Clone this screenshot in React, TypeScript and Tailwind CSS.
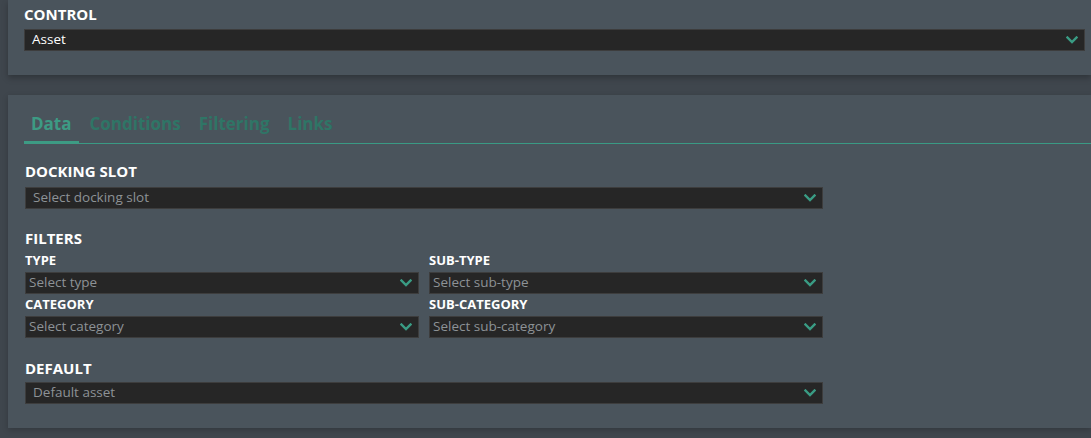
import React from "react";

const font = { fontFamily: '"Open Sans", "Noto Sans", sans-serif' };

function Chevron() {
  return (
    <svg width="12" height="8" viewBox="0 0 12 8" className="shrink-0">
      <path d="M1.5 1.5 L6 6 L10.5 1.5" fill="none" stroke="#3a9c84" strokeWidth="2.4" strokeLinecap="square" />
    </svg>
  );
}

function Select({ text, placeholder = true, pad = "pl-[7px]" }: { text: string; placeholder?: boolean; pad?: string }) {
  return (
    <div className={`h-[22px] flex items-center justify-between bg-[#262626] border border-[#3d3d3d] ${pad} pr-[6px]`}>
      <span className={`text-[13.5px] leading-none ${placeholder ? "text-[#8d9296]" : "text-white"}`}>{text}</span>
      <Chevron />
    </div>
  );
}

function Label({ children, small = false }: { children: React.ReactNode; small?: boolean }) {
  return (
    <div className={small ? "text-[13px] leading-[16px] font-bold text-white" : "text-[15px] leading-[20px] font-bold text-white"}>
      {children}
    </div>
  );
}

export default function App() {
  const tabs = ["Data", "Conditions", "Filtering", "Links"];
  return (
    <div style={font} className="w-[1091px] h-[438px] overflow-hidden bg-[#3f464d] pl-2 flex flex-col">
      <div className="h-[75px] bg-[#4a545c] pl-[16px] pr-[6px] pt-[4px] shadow-[0_3px_6px_rgba(0,0,0,0.25)] relative z-10">
        <Label>CONTROL</Label>
        <div className="mt-[5px]">
          <Select text="Asset" placeholder={false} />
        </div>
      </div>
      <div className="h-[20px]" />
      <div className="h-[333px] bg-[#4a545c] pl-[16px] shadow-[0_2px_6px_rgba(0,0,0,0.2)]">
        <div className="mt-[14px] flex gap-[4px] border-b border-[#3a9a84] h-[35px]">
          {tabs.map((t, i) => (
            <div
              key={t}
              className={`px-[7px] h-[35px] pt-[3px] text-[17px] leading-[24px] font-bold ${
                i === 0 ? "text-[#3d9b84] border-b-[3px] border-[#3d9b84] -mb-px" : "text-[#2f7566]"
              }`}
            >
              {t}
            </div>
          ))}
        </div>
        <div className="w-[799px] pl-[1px]">
          <div className="mt-[17px]">
            <Label>DOCKING SLOT</Label>
          </div>
          <div className="mt-[6px]">
            <Select text="Select docking slot" />
          </div>
          <div className="mt-[19px]">
            <Label>FILTERS</Label>
          </div>
          <div className="mt-[4px] grid grid-cols-2 gap-x-[10px]">
            <div>
              <Label small>TYPE</Label>
              <div className="mt-[4px]">
                <Select text="Select type" pad="pl-[3px]" />
              </div>
            </div>
            <div>
              <Label small>SUB-TYPE</Label>
              <div className="mt-[4px]">
                <Select text="Select sub-type" pad="pl-[3px]" />
              </div>
            </div>
            <div className="mt-[2px]">
              <Label small>CATEGORY</Label>
              <div className="mt-[4px]">
                <Select text="Select category" pad="pl-[3px]" />
              </div>
            </div>
            <div className="mt-[2px]">
              <Label small>SUB-CATEGORY</Label>
              <div className="mt-[4px]">
                <Select text="Select sub-category" pad="pl-[3px]" />
              </div>
            </div>
          </div>
          <div className="mt-[20px]">
            <Label>DEFAULT</Label>
          </div>
          <div className="mt-[4px]">
            <Select text="Default asset" />
          </div>
        </div>
      </div>
    </div>
  );
}
